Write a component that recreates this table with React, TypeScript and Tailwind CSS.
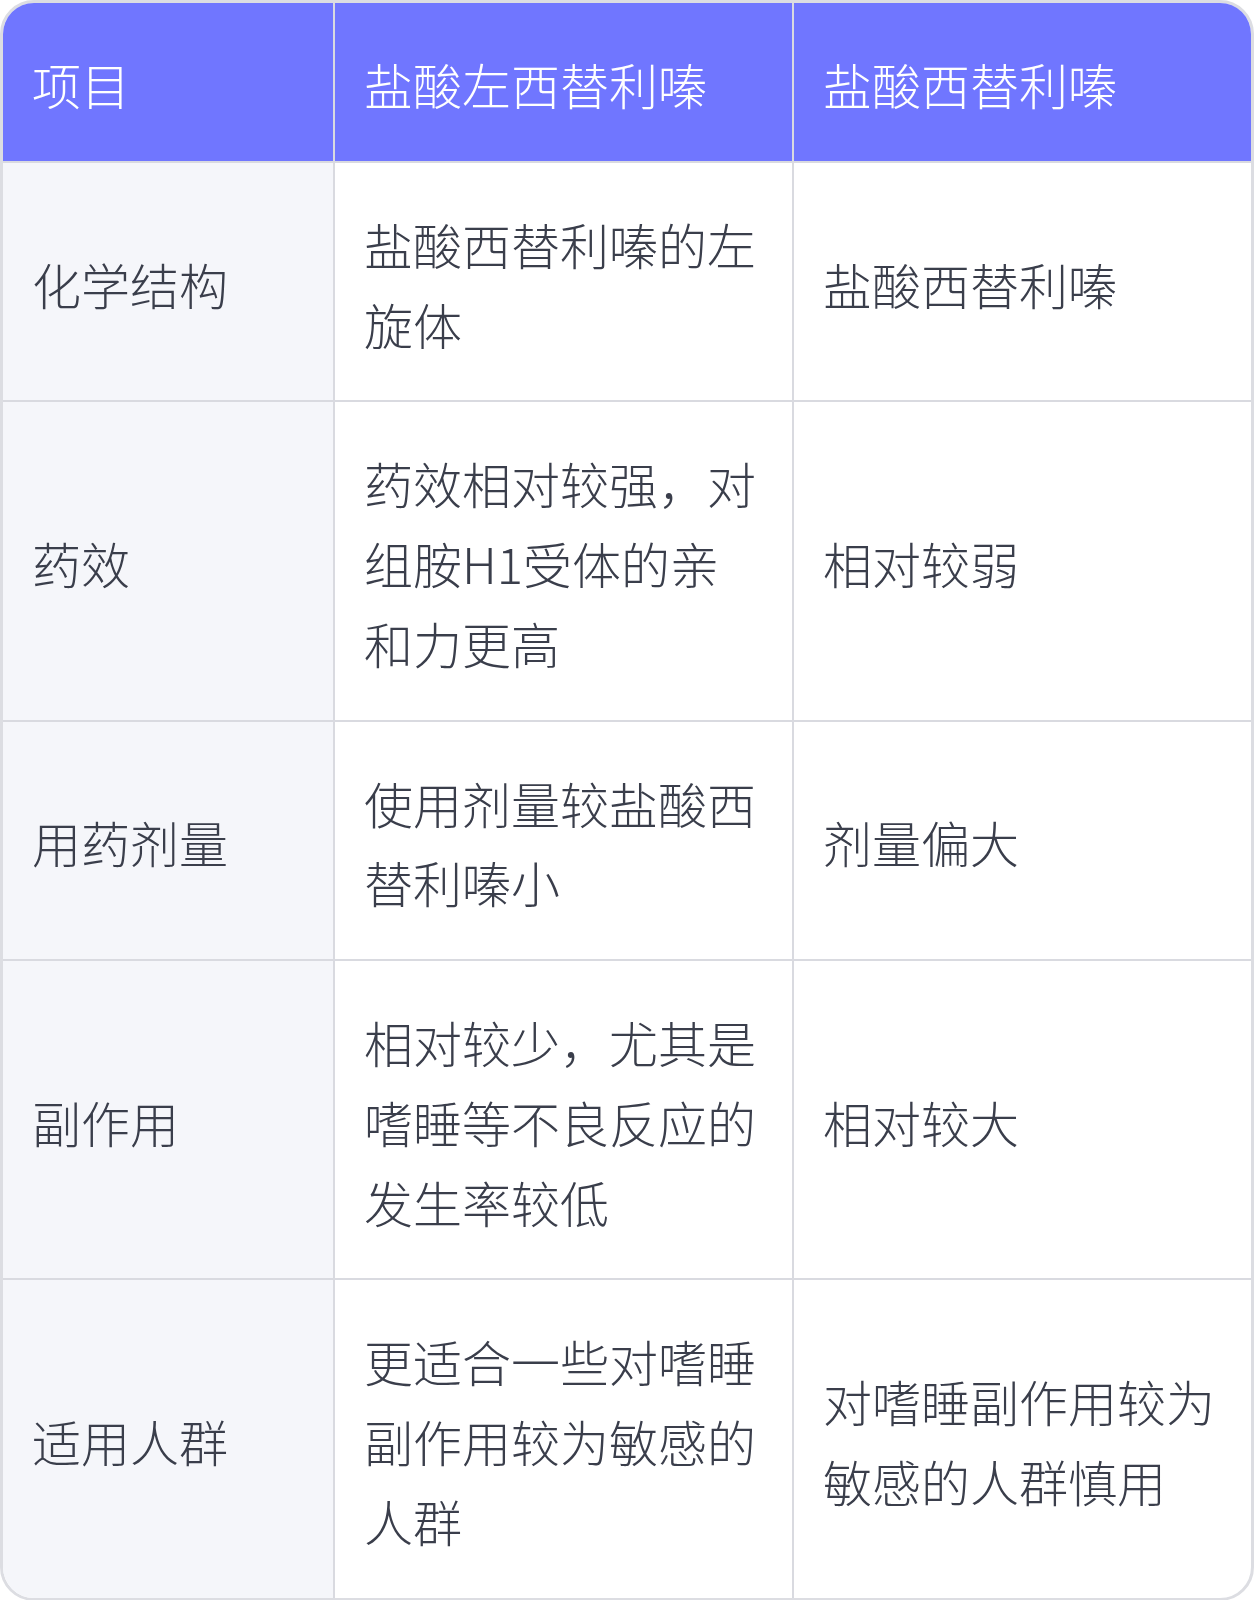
const rows: [string, string, string][] = [
  ["化学结构", "盐酸西替利嗪的左旋体", "盐酸西替利嗪"],
  ["药效", "药效相对较强，对组胺H1受体的亲和力更高", "相对较弱"],
  ["用药剂量", "使用剂量较盐酸西替利嗪小", "剂量偏大"],
  ["副作用", "相对较少，尤其是嗜睡等不良反应的发生率较低", "相对较大"],
  ["适用人群", "更适合一些对嗜睡副作用较为敏感的人群", "对嗜睡副作用较为敏感的人群慎用"],
];

export default function App() {
  return (
    <div
      className="w-[1254px] bg-white"
      style={{ fontFamily: '"Noto Sans CJK SC", "Noto Sans", sans-serif' }}
    >
      <div className="border-[3px] border-[#dcdde2] rounded-[34px] overflow-hidden">
        <div className="grid grid-cols-[332px_459px_1fr] text-[49px] leading-[79.75px] font-light">
          <div className="bg-[#7076ff] text-white pl-[29px] pr-[31px] pt-[41px] pb-[37px] border-r-2 border-b-2 border-[#d9dae0]">
            项目
          </div>
          <div className="bg-[#7076ff] text-white pl-[29px] pr-[31px] pt-[41px] pb-[37px] border-r-2 border-b-2 border-[#d9dae0]">
            盐酸左西替利嗪
          </div>
          <div className="bg-[#7076ff] text-white pl-[29px] pr-[31px] pt-[41px] pb-[37px] border-b-2 border-[#d9dae0]">
            盐酸西替利嗪
          </div>
          {rows.map((r, i) => {
            const last = i === rows.length - 1;
            return (
              <div key={i} className="contents">
                <div
                  className={`bg-[#f5f6fa] text-[#3a3e4b] pl-[29px] pr-[31px] pt-[41px] pb-[37px] flex items-center border-r-2 border-[#d9dae0] ${last ? "" : "border-b-2"}`}
                >
                  {r[0]}
                </div>
                <div
                  className={`text-[#3a3e4b] pl-[29px] pr-[31px] pt-[41px] pb-[37px] flex items-center border-r-2 border-[#d9dae0] ${last ? "" : "border-b-2"}`}
                >
                  {r[1]}
                </div>
                <div
                  className={`text-[#3a3e4b] pl-[29px] pr-[31px] pt-[41px] pb-[37px] flex items-center border-[#d9dae0] ${last ? "" : "border-b-2"}`}
                >
                  {r[2]}
                </div>
              </div>
            );
          })}
        </div>
      </div>
    </div>
  );
}
